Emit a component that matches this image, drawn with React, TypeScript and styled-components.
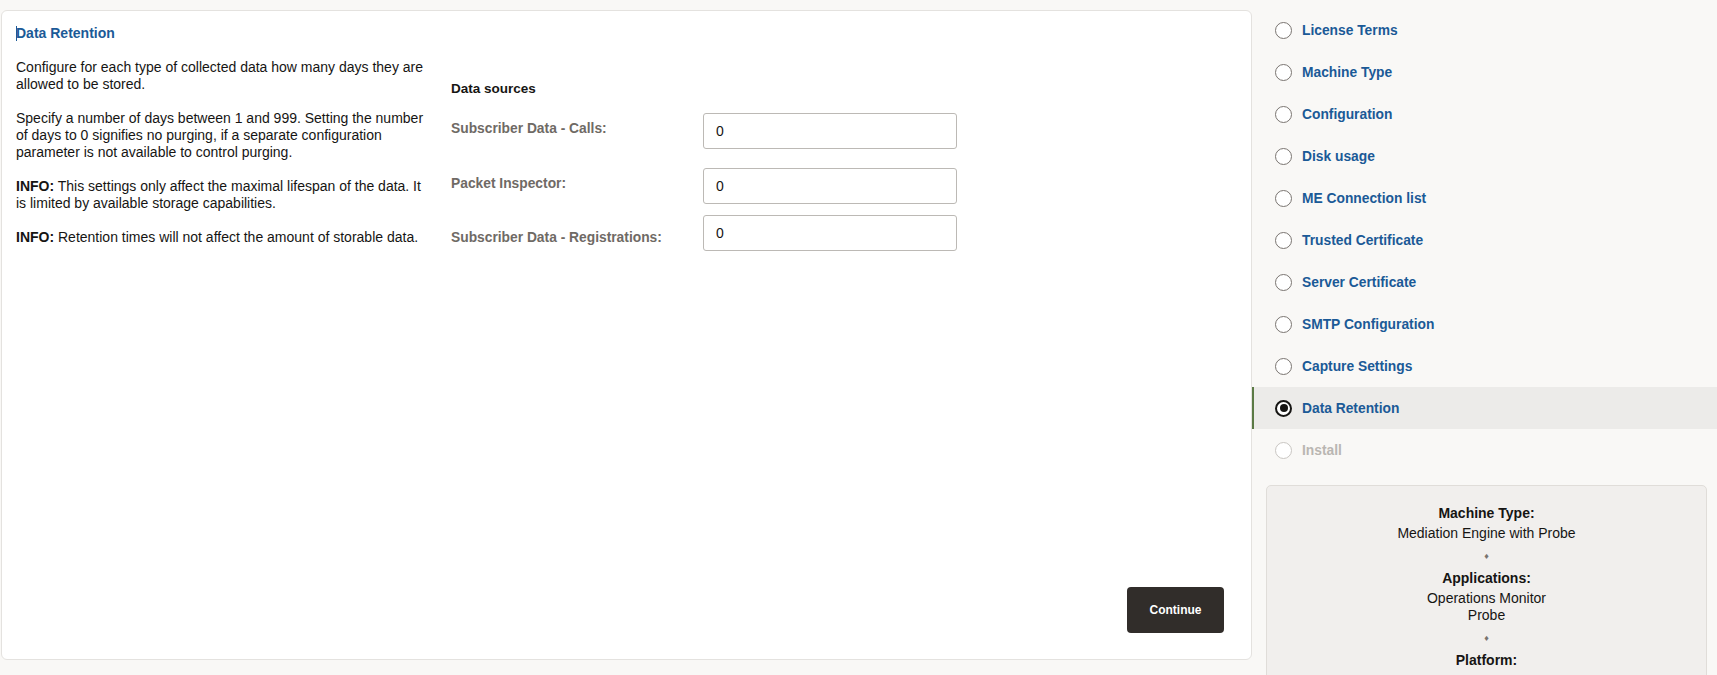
import styled, { createGlobalStyle } from "styled-components";

const GlobalStyle = createGlobalStyle`
  html, body {
    margin: 0;
    padding: 0;
    overflow: hidden;
    background: #f9f8f6;
    font-family: "Liberation Sans", Arial, sans-serif;
    font-size: 14px;
    color: #161513;
  }
`;

const Page = styled.div`
  display: flex;
  align-items: flex-start;
  height: 675px;
`;

const MainArea = styled.div`
  padding: 10px 0 0 1px;
`;

const Card = styled.section`
  box-sizing: border-box;
  width: 1251px;
  height: 650px;
  background: #ffffff;
  border: 1px solid #e4e2df;
  border-radius: 6px;
  display: flex;
  flex-direction: column;
`;

const CardBody = styled.div`
  flex: 1;
  padding: 14px 15px 0 14px;
`;

const Title = styled.h2`
  margin: 0 0 17px;
  font-size: 14px;
  line-height: 17px;
  font-weight: bold;
  color: #1b5a97;
  &::before {
    content: "";
    display: inline-block;
    width: 1px;
    height: 15px;
    margin-right: -1px;
    vertical-align: -3px;
    background: #1b5a97;
  }
`;

const Columns = styled.div`
  display: flex;
  gap: 23px;
`;

const HelpColumn = styled.div`
  width: 412px;
`;

const Para = styled.p`
  margin: 0 0 17px;
  line-height: 17px;
`;

const FormColumn = styled.div`
  padding-top: 21px;
`;

const SectionTitle = styled.h3`
  margin: 0 0 16px;
  font-size: 13.5px;
  line-height: 17px;
  font-weight: bold;
  color: #161513;
`;

const FieldRow = styled.div<{ $gap: number }>`
  display: flex;
  align-items: flex-start;
  margin-bottom: ${({ $gap }) => $gap}px;
`;

const FieldLabel = styled.label<{ $offset: number }>`
  width: 252px;
  padding-top: ${({ $offset }) => $offset}px;
  font-size: 13.8px;
  line-height: 17px;
  font-weight: bold;
  color: #6f6a65;
`;

const NumberInput = styled.input`
  box-sizing: border-box;
  width: 254px;
  height: 36px;
  padding: 0 12px;
  border: 1px solid #bcb9b5;
  border-radius: 3px;
  background: #ffffff;
  font-family: "Liberation Sans", Arial, sans-serif;
  font-size: 14px;
  color: #161513;
  outline: none;
`;

const CardFooter = styled.div`
  display: flex;
  justify-content: flex-end;
  padding: 0 27px 26px 0;
`;

const PrimaryButton = styled.button`
  width: 97px;
  height: 46px;
  border: none;
  border-radius: 4px;
  background: #312d2a;
  color: #ffffff;
  font-family: "Liberation Sans", Arial, sans-serif;
  font-size: 12px;
  font-weight: bold;
  cursor: pointer;
`;

const Sidebar = styled.aside`
  flex: 1;
  padding-top: 9px;
`;

const StepList = styled.ul`
  list-style: none;
  margin: 0;
  padding: 0;
`;

const Step = styled.li<{ $active?: boolean; $disabled?: boolean }>`
  box-sizing: border-box;
  height: 42px;
  display: flex;
  align-items: center;
  gap: 10px;
  padding-left: ${({ $active }) => ($active ? 21 : 23)}px;
  border-left: ${({ $active }) => ($active ? "2px solid #5b7a45" : "none")};
  background: ${({ $active }) => ($active ? "#ecebe9" : "transparent")};
  font-size: 13.8px;
  font-weight: bold;
  color: ${({ $disabled }) => ($disabled ? "#b9b6b2" : "#1b5a97")};
  cursor: ${({ $disabled }) => ($disabled ? "default" : "pointer")};
`;

const Radio = styled.span<{ $active?: boolean; $disabled?: boolean }>`
  box-sizing: border-box;
  width: 17px;
  height: 17px;
  border-radius: 50%;
  border: ${({ $active }) => ($active ? 2 : 1.5)}px solid
    ${({ $active, $disabled }) =>
      $active ? "#161513" : $disabled ? "#c9c6c2" : "#7a7571"};
  background: #ffffff;
  display: flex;
  align-items: center;
  justify-content: center;
  &::after {
    content: "";
    display: ${({ $active }) => ($active ? "block" : "none")};
    width: 8px;
    height: 8px;
    border-radius: 50%;
    background: #161513;
  }
`;

const Summary = styled.div`
  margin: 14px 10px 0 14px;
  padding: 19px 10px 20px;
  background: #f1efed;
  border: 1px solid #e0ddd9;
  border-radius: 5px;
  text-align: center;
  line-height: 17px;
`;

const SummaryLabel = styled.div`
  font-weight: bold;
  margin-bottom: 3px;
`;

const SummaryValue = styled.div`
  color: #161513;
`;

const Divider = styled.div`
  height: 28px;
  line-height: 28px;
  font-size: 9px;
  color: #78736e;
`;

const steps = [
  "License Terms",
  "Machine Type",
  "Configuration",
  "Disk usage",
  "ME Connection list",
  "Trusted Certificate",
  "Server Certificate",
  "SMTP Configuration",
  "Capture Settings",
  "Data Retention",
  "Install",
];

const fields = [
  { label: "Subscriber Data - Calls:", offset: 7, gap: 19 },
  { label: "Packet Inspector:", offset: 7, gap: 11 },
  { label: "Subscriber Data - Registrations:", offset: 14, gap: 0 },
];

export default function App() {
  return (
    <>
      <GlobalStyle />
      <Page>
        <MainArea>
          <Card>
            <CardBody>
              <Title>Data Retention</Title>
              <Columns>
                <HelpColumn>
                  <Para>
                    Configure for each type of collected data how many days they
                    are allowed to be stored.
                  </Para>
                  <Para>
                    Specify a number of days between 1 and 999. Setting the
                    number of days to 0 signifies no purging, if a separate
                    configuration parameter is not available to control purging.
                  </Para>
                  <Para>
                    <b>INFO:</b> This settings only affect the maximal lifespan
                    of the data. It is limited by available storage capabilities.
                  </Para>
                  <Para>
                    <b>INFO:</b> Retention times will not affect the amount of
                    storable data.
                  </Para>
                </HelpColumn>
                <FormColumn>
                  <SectionTitle>Data sources</SectionTitle>
                  {fields.map((f) => (
                    <FieldRow key={f.label} $gap={f.gap}>
                      <FieldLabel $offset={f.offset}>{f.label}</FieldLabel>
                      <NumberInput type="text" defaultValue="0" />
                    </FieldRow>
                  ))}
                </FormColumn>
              </Columns>
            </CardBody>
            <CardFooter>
              <PrimaryButton>Continue</PrimaryButton>
            </CardFooter>
          </Card>
        </MainArea>
        <Sidebar>
          <StepList>
            {steps.map((s) => {
              const active = s === "Data Retention";
              const disabled = s === "Install";
              return (
                <Step key={s} $active={active} $disabled={disabled}>
                  <Radio $active={active} $disabled={disabled} />
                  {s}
                </Step>
              );
            })}
          </StepList>
          <Summary>
            <SummaryLabel>Machine Type:</SummaryLabel>
            <SummaryValue>Mediation Engine with Probe</SummaryValue>
            <Divider>♦</Divider>
            <SummaryLabel>Applications:</SummaryLabel>
            <SummaryValue>Operations Monitor</SummaryValue>
            <SummaryValue>Probe</SummaryValue>
            <Divider>♦</Divider>
            <SummaryLabel>Platform:</SummaryLabel>
          </Summary>
        </Sidebar>
      </Page>
    </>
  );
}
